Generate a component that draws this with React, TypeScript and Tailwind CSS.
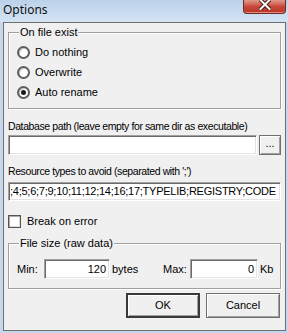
import React from "react";

const Radio = ({ checked, label }: { checked?: boolean; label: string }) => (
  <div className="flex h-[19px] items-center gap-[5px]">
    <div className="flex h-[13px] w-[13px] items-center justify-center rounded-full border-2 border-[#5e5e5e] bg-white shadow-[inset_1px_1px_0_#c8c8c8]">
      {checked && <div className="h-[5px] w-[5px] rounded-full bg-[#1a1a1a]" />}
    </div>
    <span>{label}</span>
  </div>
);

const sunken =
  "border border-t-[#a0a0a0] border-l-[#a0a0a0] border-b-white border-r-white bg-white shadow-[inset_1px_1px_0_#696969,inset_-1px_-1px_0_#e3e3e3]";

const raised =
  "flex h-[25px] w-[74px] items-center justify-center bg-[#f0f0f0] shadow-[inset_1px_1px_0_#fff,inset_-1px_-1px_0_#a0a0a0]";

const GroupBox = ({
  title,
  className,
  children,
}: {
  title: string;
  className?: string;
  children: React.ReactNode;
}) => (
  <div
    className={`relative border border-[#a0a0a0] shadow-[1px_1px_0_#fff,inset_1px_1px_0_#fff] ${className}`}
  >
    <span className="absolute left-[10px] top-[-7px] bg-[#f0f0f0] px-[1px] leading-[13px]">
      {title}
    </span>
    {children}
  </div>
);

export default function App() {
  return (
    <div className="h-[333px] w-[288px] overflow-hidden bg-[#c4d7ec] font-['Liberation_Sans',Arial,sans-serif] text-[11px] text-black">
      {/* title bar */}
      <div className="flex h-[22px] items-start justify-between bg-gradient-to-b from-[#bcd2ea] to-[#d3e3f3]">
        <span className="ml-[3px] mt-[1px] font-['Noto_Sans',sans-serif] text-[12px] leading-[17px] text-[#111]">
          Options
        </span>
        <div className="mr-[2px] flex h-[14px] w-[43px] items-center justify-center rounded-b-[4px] border border-t-0 border-[#6e2a24] bg-gradient-to-b from-[#e09a8a] via-[#c8483a] to-[#b53527] shadow-[inset_0_-1px_0_#e98a7a]">
          <svg width="12" height="11" viewBox="0 0 12 11" className="-mt-[4px]">
            <path
              d="M1.5 1 L10.5 10 M10.5 1 L1.5 10"
              stroke="#4a1a16"
              strokeWidth="4"
              strokeLinecap="square"
            />
            <path
              d="M1.5 1 L10.5 10 M10.5 1 L1.5 10"
              stroke="#fff"
              strokeWidth="2"
              strokeLinecap="square"
            />
          </svg>
        </div>
      </div>

      {/* client */}
      <div className="ml-[3px] h-[309px] w-[283px] border border-[#6f6f6f] bg-[#f0f0f0] px-[4px]">
        <GroupBox title="On file exist" className="mt-[9px] h-[77px] w-[273px] pl-[8px] pt-[10px]">
          <div className="flex flex-col gap-[1px]">
            <Radio label="Do nothing" />
            <Radio label="Overwrite" />
            <Radio checked label="Auto rename" />
          </div>
        </GroupBox>

        <div className="mt-[11px] h-[13px] whitespace-nowrap text-[10.5px] leading-[13px] tracking-[-0.4px]">
          Database path (leave empty for same dir as executable)
        </div>
        <div className="mt-[2px] flex gap-[2px]">
          <div className={`h-[20px] w-[249px] ${sunken}`} />
          <div className={`${raised} !h-[20px] !w-[22px] border border-[#707070] pb-[3px]`}>...</div>
        </div>

        <div className="mt-[10px] h-[13px] whitespace-nowrap text-[10.5px] leading-[13px] tracking-[-0.4px]">
          Resource types to avoid (separated with ';')
        </div>
        <div
          className={`mt-[4px] h-[19px] w-[273px] overflow-hidden whitespace-nowrap pl-[1px] leading-[17px] tracking-[-0.25px] ${sunken}`}
        >
          ;4;5;6;7;9;10;11;12;14;16;17;TYPELIB;REGISTRY;CODE
        </div>

        <div className="mt-[14px] flex h-[13px] items-center gap-[6px]">
          <div className="h-[13px] w-[13px] border border-[#555] bg-white shadow-[inset_1px_1px_0_#aaa,inset_-1px_-1px_0_#ddd]" />
          <span>Break on error</span>
        </div>

        <GroupBox title="File size (raw data)" className="mt-[15px] h-[46px] w-[273px] pl-[8px] pt-[15px]">
          <div className="flex h-[20px] items-center">
            <span className="w-[27px]">Min:</span>
            <div className={`flex h-[20px] w-[66px] items-center justify-end pr-[3px] ${sunken}`}>120</div>
            <span className="ml-[2px] w-[51px]">bytes</span>
            <span className="w-[27px]">Max:</span>
            <div className={`flex h-[20px] w-[68px] items-center justify-end pr-[3px] ${sunken}`}>0</div>
            <span className="ml-[2px]">Kb</span>
          </div>
        </GroupBox>

        <div className="mt-[4px] flex justify-end gap-[6px] pr-[1px]">
          <div className={`${raised} border-2 border-[#3a3a3a]`}>OK</div>
          <div className={`${raised} border border-[#707070]`}>Cancel</div>
        </div>
      </div>
    </div>
  );
}
